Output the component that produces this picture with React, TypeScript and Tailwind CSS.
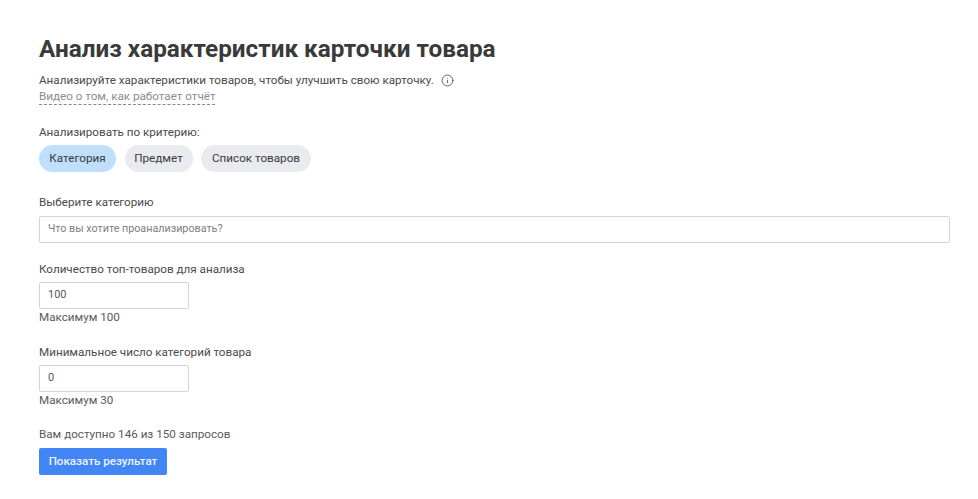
import { Info } from "lucide-react";

const font = { fontFamily: "Roboto, sans-serif" };

const Pill = ({ label, width, active }: { label: string; width: string; active?: boolean }) => (
  <div
    className={`h-[27px] rounded-full flex items-center justify-center text-[11.7px] text-[#3a3a3a] ${width} ${
      active ? "bg-[#bfdffb]" : "bg-[#e9ebee]"
    }`}
  >
    {label}
  </div>
);

const NumberField = ({
  label,
  value,
  hint,
}: {
  label: string;
  value: string;
  hint: string;
}) => (
  <div>
    <div className="text-[11.67px] leading-[16px] text-[#4a4a4a]">{label}</div>
    <div className="mt-[5px] h-[27px] w-[150px] border border-[#d2d4d6] rounded-[2px] flex items-center pl-[8px] text-[11px] text-[#5a5a5a]">
      {value}
    </div>
    <div className="text-[11.67px] leading-[16px] text-[#5a5a5a]">{hint}</div>
  </div>
);

export default function App() {
  return (
    <div
      className="w-[978px] h-[499px] bg-white overflow-hidden pl-[39px] pr-[28px] pt-[35px]"
      style={font}
    >
      <h1 className="text-[24.3px] leading-[28px] font-bold text-[#3a3a3a]">
        Анализ характеристик карточки товара
      </h1>
      <div className="mt-[9px] flex items-center text-[11.67px] leading-[16px] text-[#4a4a4a]">
        Анализируйте характеристики товаров, чтобы улучшить свою карточку.
        <Info size={13} strokeWidth={1.5} className="ml-[7px] text-[#444]" />
      </div>
      <div className="mt-[1px] flex">
        <span className="text-[11.67px] leading-[15px] text-[#8c8c8c] border-b border-dashed border-[#888]">
          Видео о том, как работает отчёт
        </span>
      </div>
      <div className="mt-[19px] text-[11.67px] leading-[16px] text-[#4a4a4a]">
        Анализировать по критерию:
      </div>
      <div className="mt-[5px] flex gap-[8.5px]">
        <Pill label="Категория" width="w-[77px]" active />
        <Pill label="Предмет" width="w-[68px]" />
        <Pill label="Список товаров" width="w-[110px]" />
      </div>
      <div className="mt-[22px] text-[11.67px] leading-[16px] text-[#4a4a4a]">
        Выберите категорию
      </div>
      <div className="mt-[6px] h-[27px] border border-[#d2d4d6] rounded-[2px] flex items-center pl-[8px] text-[10.75px] text-[#808080]">
        Что вы хотите проанализировать?
      </div>
      <div className="mt-[18px]">
        <NumberField label="Количество топ-товаров для анализа" value="100" hint="Максимум 100" />
      </div>
      <div className="mt-[19px]">
        <NumberField label="Минимальное число категорий товара" value="0" hint="Максимум 30" />
      </div>
      <div className="mt-[18px] text-[11.67px] leading-[16px] text-[#5a5a5a]">
        Вам доступно 146 из 150 запросов
      </div>
      <div className="mt-[6px] h-[27px] w-[128px] rounded-[2px] bg-[#4285f4] flex items-center justify-center text-[11.6px] font-medium text-[#eef5ff]">
        Показать результат
      </div>
    </div>
  );
}
